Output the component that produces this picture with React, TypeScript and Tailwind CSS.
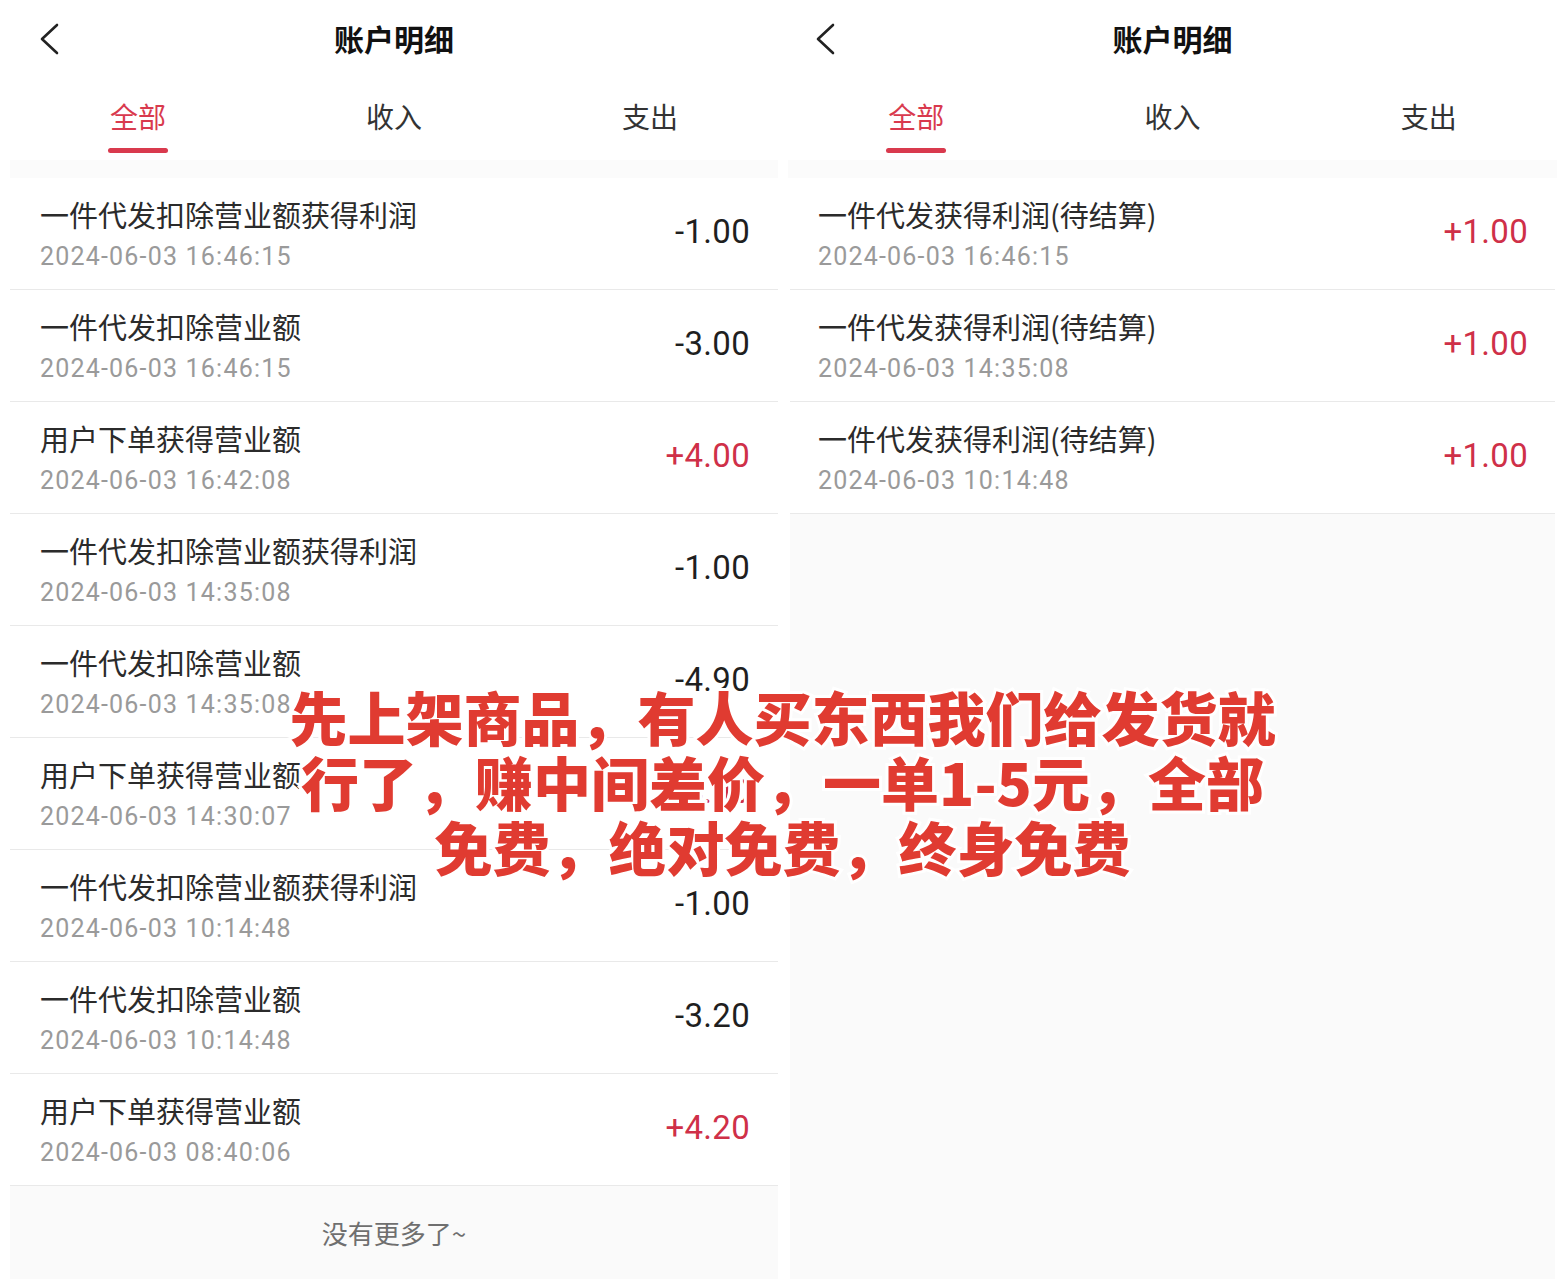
type Entry = { title: string; time: string; amount: string };

const leftRows: Entry[] = [
  { title: '一件代发扣除营业额获得利润', time: '2024-06-03 16:46:15', amount: '-1.00' },
  { title: '一件代发扣除营业额', time: '2024-06-03 16:46:15', amount: '-3.00' },
  { title: '用户下单获得营业额', time: '2024-06-03 16:42:08', amount: '+4.00' },
  { title: '一件代发扣除营业额获得利润', time: '2024-06-03 14:35:08', amount: '-1.00' },
  { title: '一件代发扣除营业额', time: '2024-06-03 14:35:08', amount: '-4.90' },
  { title: '用户下单获得营业额', time: '2024-06-03 14:30:07', amount: '+4.90' },
  { title: '一件代发扣除营业额获得利润', time: '2024-06-03 10:14:48', amount: '-1.00' },
  { title: '一件代发扣除营业额', time: '2024-06-03 10:14:48', amount: '-3.20' },
  { title: '用户下单获得营业额', time: '2024-06-03 08:40:06', amount: '+4.20' },
]

const rightRows: Entry[] = [
  { title: '一件代发获得利润(待结算)', time: '2024-06-03 16:46:15', amount: '+1.00' },
  { title: '一件代发获得利润(待结算)', time: '2024-06-03 14:35:08', amount: '+1.00' },
  { title: '一件代发获得利润(待结算)', time: '2024-06-03 10:14:48', amount: '+1.00' },
]

function BackArrow() {
  return (
    <svg width="20" height="32" viewBox="0 0 20 32" fill="none">
      <path d="M17 2 L2 16 L17 30" stroke="#222" strokeWidth="2.6" strokeLinecap="round" strokeLinejoin="round" />
    </svg>
  )
}

function Header({ arrowPad }: { arrowPad: string }) {
  return (
    <>
      <div className="relative h-[78px] flex items-center justify-center">
        <div className={`absolute top-[23px] ${arrowPad}`}>
          <BackArrow />
        </div>
        <p className="text-[30px] font-bold text-[#111] leading-[40px] mb-[3px]">账户明细</p>
      </div>
      <div className="h-[82px] grid grid-cols-3">
        <div className="flex flex-col items-center pt-[21px]">
          <p className="text-[28px] leading-[34px] text-[#d93a4e]">全部</p>
          <div className="mt-[15px] h-[5px] w-[60px] rounded-full bg-[#d93a4e]"></div>
        </div>
        <div className="flex flex-col items-center pt-[21px]">
          <p className="text-[28px] leading-[34px] text-[#333]">收入</p>
        </div>
        <div className="flex flex-col items-center pt-[21px]">
          <p className="text-[28px] leading-[34px] text-[#333]">支出</p>
        </div>
      </div>
      <div className="h-[18px] bg-[#fbfbfb]"></div>
    </>
  )
}

function Row({ e, pad }: { e: Entry; pad: string }) {
  const plus = e.amount.startsWith('+')
  return (
    <div className={`h-[112px] flex items-center justify-between border-b border-[#e9e9e9] bg-white ${pad}`}>
      <div className="flex flex-col gap-[10px]">
        <p className="text-[29px] leading-[36px] text-[#2b2b2b]">{e.title}</p>
        <p className="font-['Roboto','Noto_Sans_CJK_SC',sans-serif] text-[25px] leading-[30px] tracking-[1.2px] text-[#9a9a9a]">{e.time}</p>
      </div>
      <p className={`font-['Roboto','Noto_Sans_CJK_SC',sans-serif] text-[33px] leading-[40px] tracking-[0.3px] mb-[4px] ${plus ? 'text-[#cf3048]' : 'text-[#1f1f1f]'}`}>
        {e.amount}
      </p>
    </div>
  )
}

export default function App() {
  return (
    <div className="relative w-[1565px] h-[1279px] overflow-hidden bg-white flex font-['Noto_Sans_CJK_SC','Noto_Sans',sans-serif]">
      <div className="w-[788px] flex flex-col">
        <div className="mx-[10px]">
          <Header arrowPad="left-[30px]" />
        </div>
        <div className="mx-[10px] flex-1 flex flex-col">
          {leftRows.map((e, i) => (
            <Row key={i} e={e} pad="pl-[30px] pr-[28px]" />
          ))}
          <div className="flex-1 flex items-center justify-center bg-[#fafafa]">
            <p className="text-[26px] text-[#6f6f6f] mb-[1px]">没有更多了~</p>
          </div>
        </div>
      </div>
      <div className="w-[777px] flex flex-col">
        <div className="mr-[8px]">
          <Header arrowPad="left-[28px]" />
        </div>
        <div className="ml-[2px] mr-[10px] flex-1 flex flex-col">
          {rightRows.map((e, i) => (
            <Row key={i} e={e} pad="pl-[28px] pr-[27px]" />
          ))}
          <div className="flex-1 bg-[#fafafa]"></div>
        </div>
      </div>
      <div className="absolute left-0 right-0 top-[684px] text-center">
        <p className="text-[58px] leading-[65px] font-black text-[#e03b31] [-webkit-text-stroke:6px_white] [paint-order:stroke_fill]">
          先上架商品，有人买东西我们给发货就
          <br />
          行了，赚中间差价，一单1-5元，全部
          <br />
          免费，绝对免费，终身免费
        </p>
      </div>
    </div>
  )
}
